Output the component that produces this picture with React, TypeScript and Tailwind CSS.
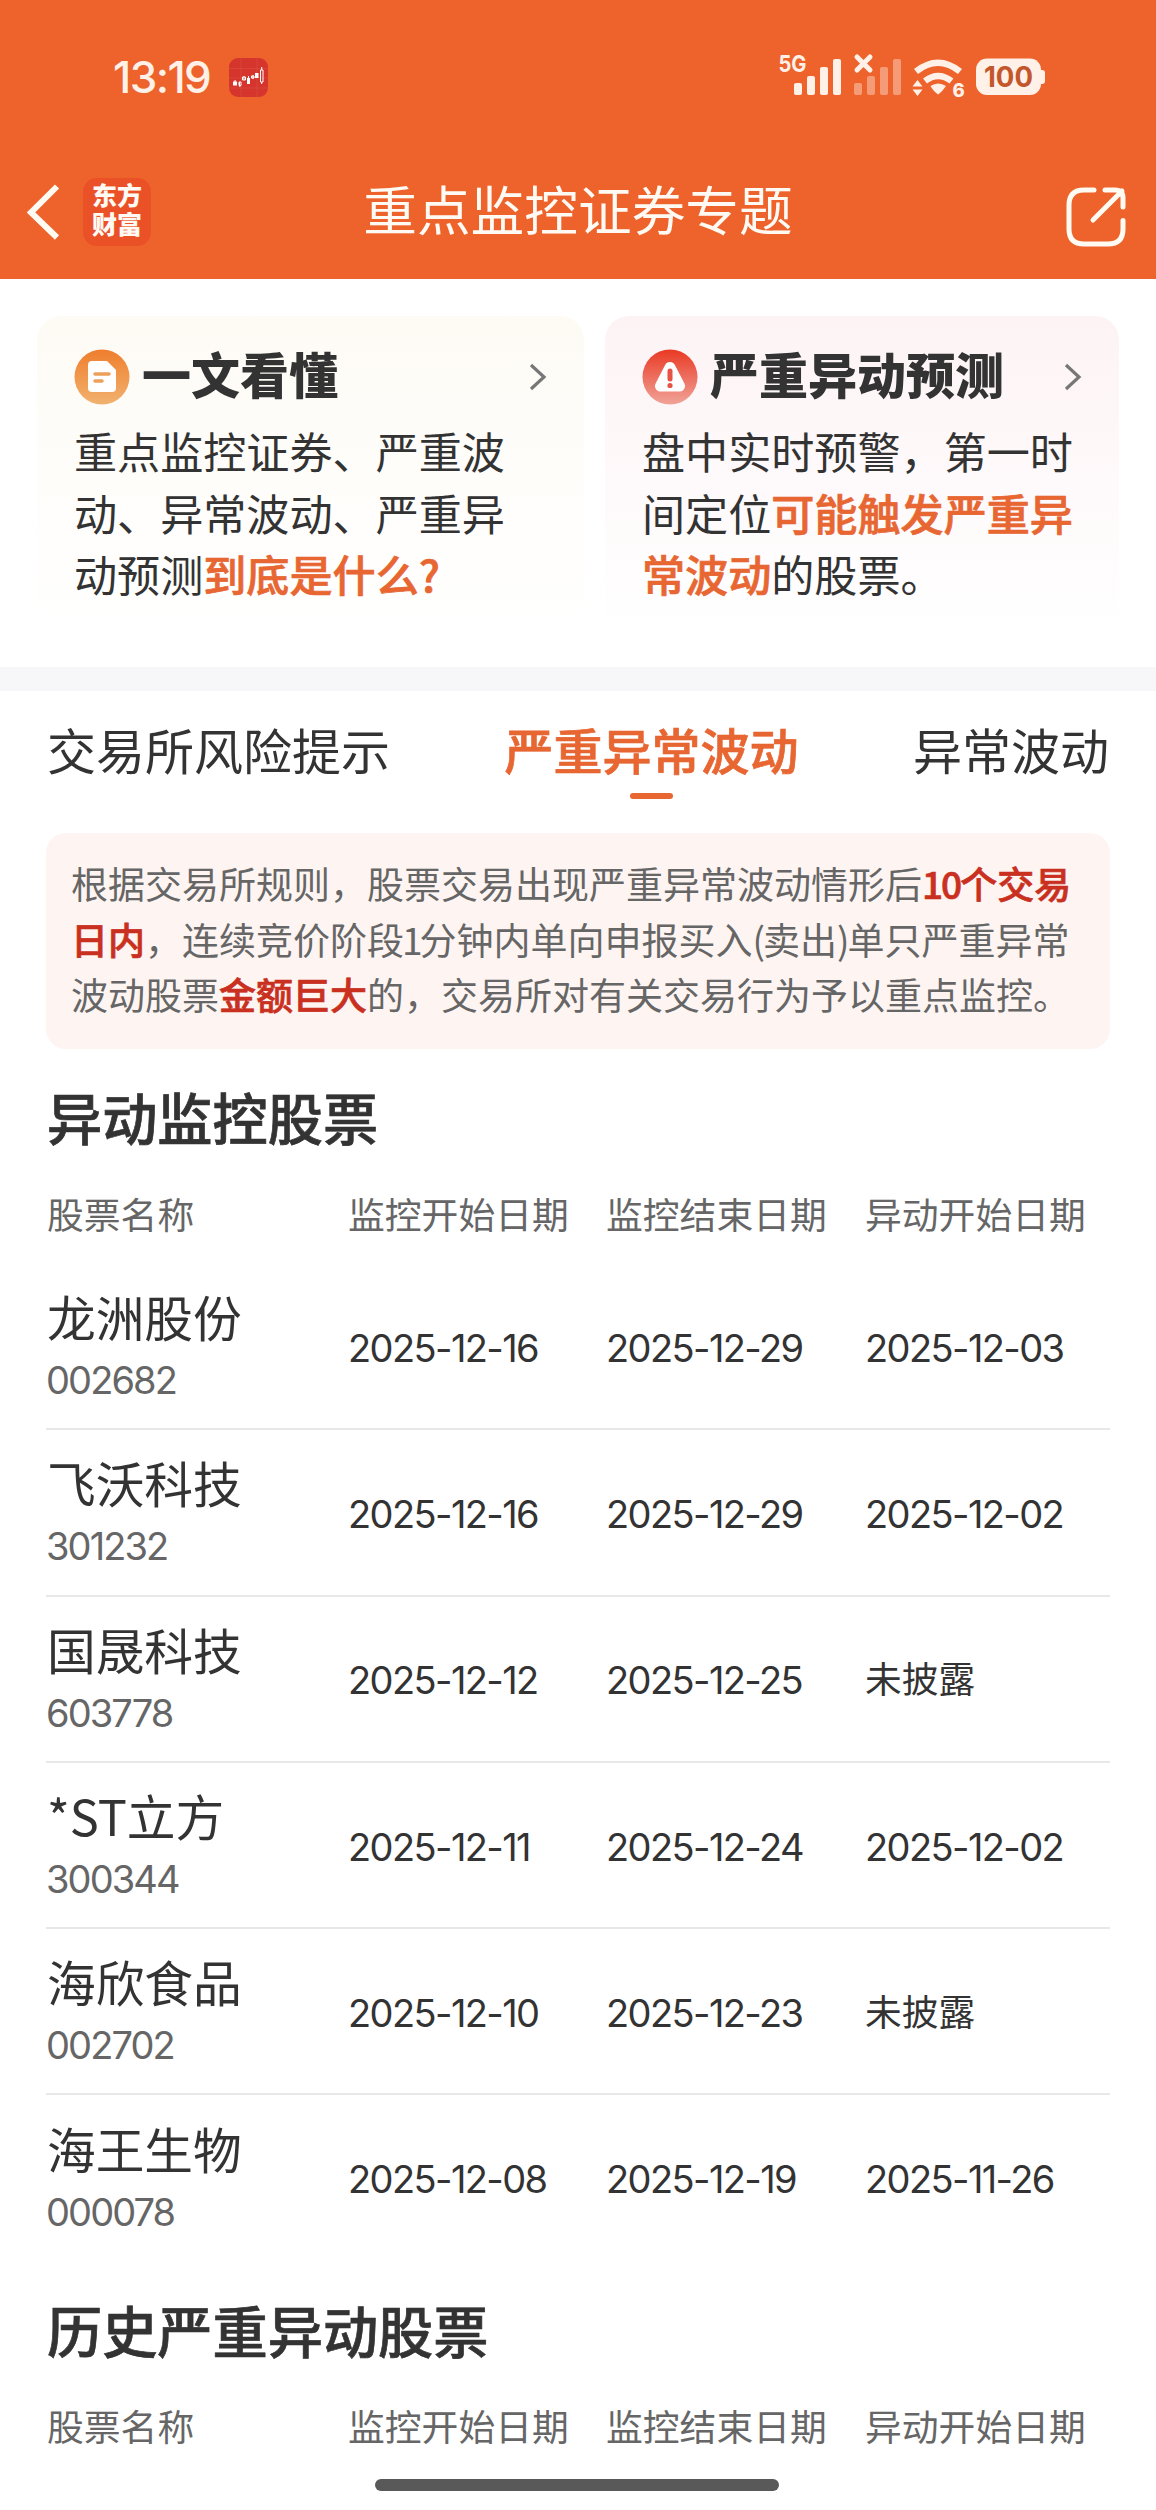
import React from "react";

const CJK = "font-['Noto_Sans_CJK_SC',sans-serif]";
const NUM = "font-['Inter','Noto_Sans_CJK_SC',sans-serif]";
const SEMI = "font-medium [-webkit-text-stroke:0.7px_currentColor]";

const stocks = [
  ["龙洲股份", "002682", "2025-12-16", "2025-12-29", "2025-12-03"],
  ["飞沃科技", "301232", "2025-12-16", "2025-12-29", "2025-12-02"],
  ["国晟科技", "603778", "2025-12-12", "2025-12-25", "未披露"],
  ["*ST立方", "300344", "2025-12-11", "2025-12-24", "2025-12-02"],
  ["海欣食品", "002702", "2025-12-10", "2025-12-23", "未披露"],
  ["海王生物", "000078", "2025-12-08", "2025-12-19", "2025-11-26"],
];

function StatusBar() {
  return (
    <div className="flex h-[154px] items-center pl-[113px] text-[#fff0e8]">
      <span className="w-[100px] shrink-0 whitespace-nowrap font-['Inter',sans-serif] text-[44px] font-medium tracking-[-1.6px]">13:19</span>
      <svg className="ml-[16px] shrink-0" width="39" height="39" viewBox="0 0 39 39">
        <rect width="39" height="39" rx="9" fill="#d5352d" />
        <path d="M0 10.500H39M0 20H39M0 30H39M12 0V39M28 0V39" stroke="#db4a3c" strokeWidth="0.700" />
        <path d="M4 23.500h4v4h-4zM18 20h3v6h-3zM26 15h3.500v5H26z" fill="#fff" />
        <path d="M10.500 24v3.500M15 18v4M24 17v4M10 24h2v3.500h-2zM13.500 19h3v3h-3zM22.500 18h2.500v2h-2.500zM31.500 12h2.500v12h-2.500zM32.700 9v3M32.700 24v2M6 22v2M10.800 27v2M19.500 18v2" stroke="#fff" strokeWidth="1" fill="none" />
      </svg>
      <svg className="ml-[506px] shrink-0 overflow-visible" width="280" height="62" viewBox="-4 -6 280 62" fill="#fff0e8">
        <text x="0.500" y="19.500" fontSize="23.500" fontWeight="700" fontFamily="Inter, sans-serif" textLength="28" lengthAdjust="spacingAndGlyphs">5G</text>
        <rect x="16" y="31" width="8" height="12" rx="2" />
        <rect x="29" y="24" width="8" height="19" rx="2" />
        <rect x="42" y="15" width="8" height="28" rx="2" />
        <rect x="55" y="7" width="8" height="36" rx="2" />
        <path d="M79 5L92 18M92 5L79 18" stroke="#fff0e8" strokeWidth="5" strokeLinecap="round" />
        <g fill="#f69b77">
          <rect x="76" y="31" width="8" height="12" rx="2" />
          <rect x="89" y="24" width="8" height="19" rx="2" />
          <rect x="102" y="15" width="8" height="28" rx="2" />
          <rect x="115" y="7" width="8" height="36" rx="2" />
        </g>
        <path d="M138 19.500Q160 2 182 19.500M147 29Q160 19 173.500 29" fill="none" stroke="#fff0e8" strokeWidth="6.500" />
        <path d="M152.500 34Q160 29 168 34Q164 40 160.200 42.500Q156 40 152.500 34Z" />
        <path d="M134.500 34.500L139.500 28L144.500 34.500ZM134.500 37.500L139.500 44L144.500 37.500Z" />
        <text x="174.500" y="44.500" fontSize="18.500" fontWeight="800" fontFamily="Inter, sans-serif">6</text>
        <rect x="198" y="6.500" width="65" height="36.500" rx="11" />
        <rect x="259" y="18" width="8" height="14" rx="3" />
        <text x="206" y="35" fontSize="28.500" fontWeight="700" fill="#c4562c" fontFamily="Inter, sans-serif" textLength="49" lengthAdjust="spacingAndGlyphs">100</text>
      </svg>
    </div>
  );
}

function NavBar() {
  return (
    <div className="flex h-[124px] items-start justify-between pl-[26px] pr-[29px] text-[#fffaf4]">
      <div className="mt-[24px] flex items-center">
        <svg width="34" height="56" viewBox="0 0 34 56" fill="none" stroke="#fffaf2" strokeWidth="6">
          <path d="M31 2.500L5 28.500L31 53.500" />
        </svg>
        <div className={`ml-[23px] flex h-[68px] w-[68px] flex-col items-center rounded-[14px] bg-[#eb5127] pt-[2px] text-[25px] font-black leading-[29px] ${CJK}`}>
          <span>东方</span>
          <span>财富</span>
        </div>
      </div>
      <h1 className="mr-[60px] mt-[17px] text-[53.700px] font-normal leading-[74px]">重点监控证券专题</h1>
      <svg className="mt-[32px]" width="62" height="62" viewBox="0 0 62 62" fill="none" stroke="#fffaf2" strokeWidth="5" strokeLinecap="round">
        <path d="M29 4H19Q4 4 4 19V43Q4 58 19 58H43Q58 58 58 43V34.500M40 4H50Q58 4 58 12V21M57 5L28 34" />
      </svg>
    </div>
  );
}

function Chevron() {
  return (
    <svg width="18" height="28" viewBox="0 0 18 28" fill="none" stroke="#777" strokeWidth="3.200">
      <path d="M2 2L15 14L2 26" />
    </svg>
  );
}

function Cards() {
  return (
    <div className="flex h-[388px] pl-[37px] pt-[37px]">
      <section className="h-[315px] w-[547px] rounded-t-[24px] bg-linear-to-b from-[#fefbf5] to-white pl-[37px] pr-[37px] pt-[24px]">
        <div className="flex h-[74px] items-center">
          <svg width="56" height="56" viewBox="0 0 56 56">
            <defs>
              <linearGradient id="doc" x1="0" y1="0" x2="0" y2="1">
                <stop stopColor="#ef7e2d" />
                <stop offset="1" stopColor="#f1b26f" />
              </linearGradient>
            </defs>
            <circle cx="28" cy="28" r="27.500" fill="url(#doc)" />
            <path d="M18 12H33L42 21V39Q42 43 38 43H18Q14 43 14 39V16Q14 12 18 12Z" fill="#fff" />
            <path d="M21 25H35M21 32H28" stroke="#eda05a" strokeWidth="3.500" strokeLinecap="round" />
          </svg>
          <h2 className="-mt-[8px] ml-[12px] flex-1 text-[49px] font-black text-[#333]">一文看懂</h2>
          <Chevron />
        </div>
        <p className="mt-[6px] text-[43.100px] leading-[61.500px] text-[#333]">
          重点监控证券、严重波<br />动、异常波动、严重异<br />动预测<b className={`text-[#e76632] ${SEMI}`}>到底是什么?</b>
        </p>
      </section>
      <section className="ml-[21px] h-[315px] w-[514px] rounded-t-[24px] bg-linear-to-b from-[#fdf3f5] to-white pl-[37px] pr-[37px] pt-[24px]">
        <div className="flex h-[74px] items-center">
          <svg className="shrink-0" width="56" height="56" viewBox="0 0 56 56">
            <defs>
              <linearGradient id="alert" x1="0" y1="0" x2="0" y2="1">
                <stop stopColor="#e93a24" />
                <stop offset="1" stopColor="#f0a398" />
              </linearGradient>
            </defs>
            <circle cx="28" cy="28" r="27.500" fill="url(#alert)" />
            <path d="M28 18.500L18.500 37H37.500Z" fill="#fff" stroke="#fff" strokeWidth="11" strokeLinejoin="round" />
            <path d="M28 22V30" stroke="#e65445" strokeWidth="5" strokeLinecap="round" />
            <circle cx="28" cy="36.500" r="2.600" fill="#e65445" />
          </svg>
          <h2 className="-mt-[8px] ml-[12px] flex-1 whitespace-nowrap text-[49px] font-black text-[#333]">严重异动预测</h2>
          <Chevron />
        </div>
        <p className="mt-[6px] whitespace-nowrap text-[43.100px] leading-[61.500px] text-[#333]">
          盘中实时预警，第一时<br />间定位<b className={`text-[#e76632] ${SEMI}`}>可能触发严重异</b><br /><b className={`text-[#e76632] ${SEMI}`}>常波动</b>的股票。
        </p>
      </section>
    </div>
  );
}

function Tabs() {
  return (
    <nav className="flex h-[142px] items-start justify-between px-[47px] pt-[22px] text-[49px] leading-[72px] text-[#333]">
      <span>交易所风险提示</span>
      <span className={`flex flex-col items-center text-[#e76632] ${SEMI}`}>
        严重异常波动
        <i className="mt-[8px] h-[6px] w-[43px] rounded-full bg-[#e76632]" />
      </span>
      <span>异常波动</span>
    </nav>
  );
}

function Notice() {
  return (
    <div className="mx-[46px] h-[216px] whitespace-nowrap rounded-[20px] bg-[#fef5f2] pl-[25px] pt-[23px] text-[37px] leading-[55.500px] text-[#666]">
      <p>根据交易所规则，股票交易出现严重异常波动情形后<b className={`text-[#c9301f] ${SEMI}`}><span className="tracking-[-2px]">10</span>个交易</b></p>
      <p><b className={`text-[#c9301f] ${SEMI}`}>日内</b>，连续竞价阶段<span className="ml-[-2px] tracking-[-3px]">1</span>分钟内单向申报买入<span className="tracking-[-2px]">(</span>卖出<span className="tracking-[-2px]">)</span>单只严重异常</p>
      <p>波动股票<b className={`text-[#c9301f] ${SEMI}`}>金额巨大</b>的，交易所对有关交易行为予以重点监控。</p>
    </div>
  );
}

const COLS = "grid grid-cols-[301px_258px_259px_245px]";

function TableHead() {
  return (
    <div className={`${COLS} pl-px text-[36.800px] leading-[54px] text-[#666]`}>
      <span>股票名称</span>
      <span>监控开始日期</span>
      <span>监控结束日期</span>
      <span>异动开始日期</span>
    </div>
  );
}

export default function App() {
  return (
    <div className={`h-[2510px] w-[1156px] overflow-hidden bg-white ${CJK}`}>
      <header className="h-[279px] bg-[#ed632b]">
        <StatusBar />
        <NavBar />
      </header>
      <Cards />
      <div className="h-[24px] bg-[#f7f7fa]" />
      <Tabs />
      <Notice />
      <main className="px-[46px]">
        <h2 className={`mt-[27px] pl-px text-[55.200px] leading-[80px] text-[#333] ${SEMI}`}>异动监控股票</h2>
        <div className="mt-[30px]"><TableHead /></div>
        <div className="mt-[24px]">
          {stocks.map(([name, code, a, b, c]) => (
            <div key={code} className={`${COLS} h-[166.300px] items-center border-b-2 border-[#e8e8e8] pl-px text-[37px] text-[#333] last:border-transparent`}>
              <div className="pt-[4px]">
                <div className="text-[48.700px] leading-[64px]">{name}</div>
                <div className={`-ml-px text-[38px] leading-[64px] tracking-[-1.900px] text-[#666] ${NUM}`}>{code}</div>
              </div>
              <span className={`pt-[4px] text-[38px] tracking-[-1.600px] ${NUM}`}>{a}</span>
              <span className={`pt-[4px] text-[38px] tracking-[-1.600px] ${NUM}`}>{b}</span>
              <span className={c === "未披露" ? "pb-[2px] text-[36.700px]" : `pt-[4px] text-[38px] tracking-[-1.600px] ${NUM}`}>{c}</span>
            </div>
          ))}
        </div>
        <h2 className={`mt-[27px] pl-px text-[55.200px] leading-[80px] text-[#333] ${SEMI}`}>历史严重异动股票</h2>
        <div className="mt-[29px]"><TableHead /></div>
      </main>
      <div className="mx-auto mt-[27px] h-[12px] w-[404px] -translate-x-px rounded-full bg-[#595959]" />
    </div>
  );
}
